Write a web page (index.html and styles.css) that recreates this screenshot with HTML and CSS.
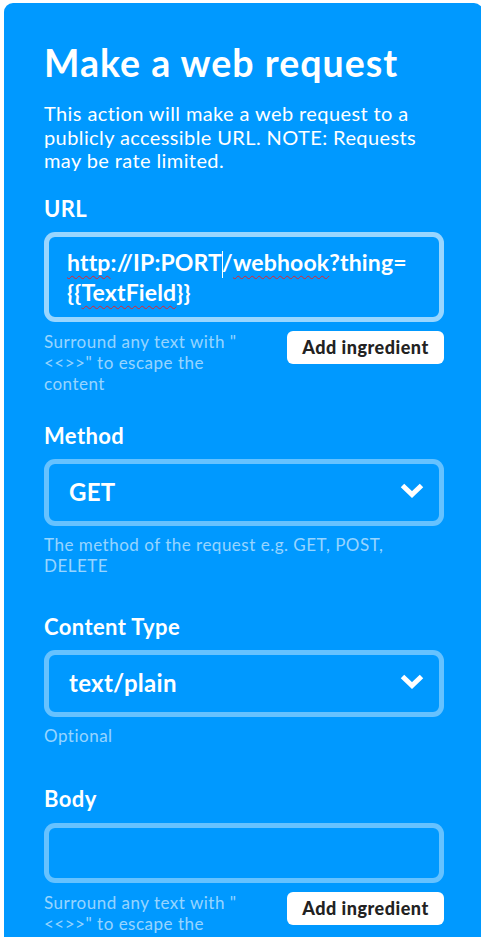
FILE: index.html
```html
<!DOCTYPE html>
<html lang="en">
<head>
<meta charset="utf-8">
<title>Make a web request</title>
<link rel="stylesheet" href="styles.css">
</head>
<body>
<main class="card">
  <h1 class="title">Make a web request</h1>
  <p class="desc">This action will make a web request to a<br>publicly accessible URL. NOTE: Requests<br>may be rate limited.</p>

  <section class="field field-url">
    <label class="label">URL</label>
    <div class="box box-focus box-url">
      <div class="url-text"><span class="spell">http</span>://IP:PORT<span class="caret"></span>/<span class="spell">webhook</span>?thing=<br>{{<span class="spell">TextField</span>}}</div>
    </div>
    <div class="helper-row">
      <p class="helper">Surround any text with "<br>&lt;&lt;&gt;&gt;" to escape the<br>content</p>
      <button class="btn">Add ingredient</button>
    </div>
  </section>

  <section class="field field-method">
    <label class="label">Method</label>
    <div class="box box-select">
      <span class="select-value">GET</span>
      <svg class="chevron" viewBox="0 0 24 15" width="24" height="15"><polyline points="2.5,2.5 12,11.5 21.5,2.5" fill="none" stroke="#fff" stroke-width="5" stroke-linejoin="miter" stroke-linecap="butt"/></svg>
    </div>
    <p class="helper helper-below">The method of the request e.g. GET, POST,<br>DELETE</p>
  </section>

  <section class="field field-ctype">
    <label class="label">Content Type</label>
    <div class="box box-select">
      <span class="select-value">text/plain</span>
      <svg class="chevron" viewBox="0 0 24 15" width="24" height="15"><polyline points="2.5,2.5 12,11.5 21.5,2.5" fill="none" stroke="#fff" stroke-width="5" stroke-linejoin="miter" stroke-linecap="butt"/></svg>
    </div>
    <p class="helper helper-below">Optional</p>
  </section>

  <section class="field field-body">
    <label class="label">Body</label>
    <div class="box box-body"></div>
    <div class="helper-row">
      <p class="helper">Surround any text with "<br>&lt;&lt;&gt;&gt;" to escape the<br>content</p>
      <button class="btn">Add ingredient</button>
    </div>
  </section>
</main>
</body>
</html>
```

FILE: styles.css
```css
html, body {
  margin: 0;
  padding: 0;
  background: #ffffff;
}
body {
  overflow: hidden;
  height: 937px;
  font-family: Lato, "Noto Sans", "DejaVu Sans", sans-serif;
}
.card {
  display: block;
  box-sizing: border-box;
  width: 479px;
  height: 934px;
  overflow: hidden;
  margin: 3px 0 0 4px;
  padding: 38px 39px 0 40px;
  background: #0099ff;
  border-radius: 9px 9px 0 0;
  color: #ffffff;
}
.title {
  margin: 0;
  font-size: 37.5px;
  line-height: 44px;
  font-weight: 700;
  letter-spacing: 1px;
  white-space: nowrap;
}
.desc {
  margin: 17px 0 0;
  font-size: 20px;
  line-height: 23.5px;
  font-weight: 400;
  letter-spacing: 0.4px;
  white-space: nowrap;
}
.field {
  display: flex;
  flex-direction: column;
}
.label {
  display: block;
  font-size: 22px;
  line-height: 26px;
  font-weight: 700;
  letter-spacing: 0.4px;
}
.field-url { margin-top: 23px; }
.field-method { margin-top: 29px; }
.field-ctype { margin-top: 38px; }
.field-body { margin-top: 40px; }

.box {
  box-sizing: border-box;
  margin-top: 10px;
  border: 5px solid rgba(255,255,255,0.4);
  border-radius: 11px;
  background: #0099ff;
}
.box-focus {
  border-color: rgba(255,255,255,0.6);
}
.box-url {
  height: 90px;
  padding: 11px 18px 0;
}
.url-text {
  font-size: 23px;
  line-height: 29px;
  font-weight: 700;
  letter-spacing: 0.15px;
  white-space: nowrap;
}
.spell {
  text-decoration: underline wavy #e8202a;
  text-decoration-thickness: 1px;
  text-underline-offset: 4px;
  text-decoration-skip-ink: none;
}
.caret {
  display: inline-block;
  width: 0;
  height: 27px;
  border-left: 1px solid #ffffff;
  vertical-align: -7px;
  margin: 0 -1px 0 0;
}
.box-select {
  height: 67px;
  display: flex;
  align-items: center;
  justify-content: space-between;
  padding: 0 15px 0 20px;
}
.select-value {
  font-size: 24px;
  font-weight: 700;
  line-height: 28px;
  letter-spacing: 0.3px;
}
.chevron {
  display: block;
  margin-top: -3px;
}
.box-body {
  height: 60px;
  margin-top: 11px;
}
.helper-row {
  margin-top: 9px;
  display: flex;
  justify-content: space-between;
  align-items: flex-start;
}
.helper {
  margin: 0;
  font-size: 17px;
  line-height: 21px;
  letter-spacing: 0.5px;
  color: rgba(255,255,255,0.6);
  white-space: nowrap;
}
.helper-below {
  margin-top: 8px;
}
.btn {
  box-sizing: border-box;
  width: 157px;
  height: 33px;
  margin: 0;
  padding: 0;
  border: none;
  border-radius: 6px;
  background: #ffffff;
  color: #222222;
  font-family: Lato, "Noto Sans", "DejaVu Sans", sans-serif;
  font-size: 18px;
  font-weight: 900;
  letter-spacing: 0.5px;
}
```
